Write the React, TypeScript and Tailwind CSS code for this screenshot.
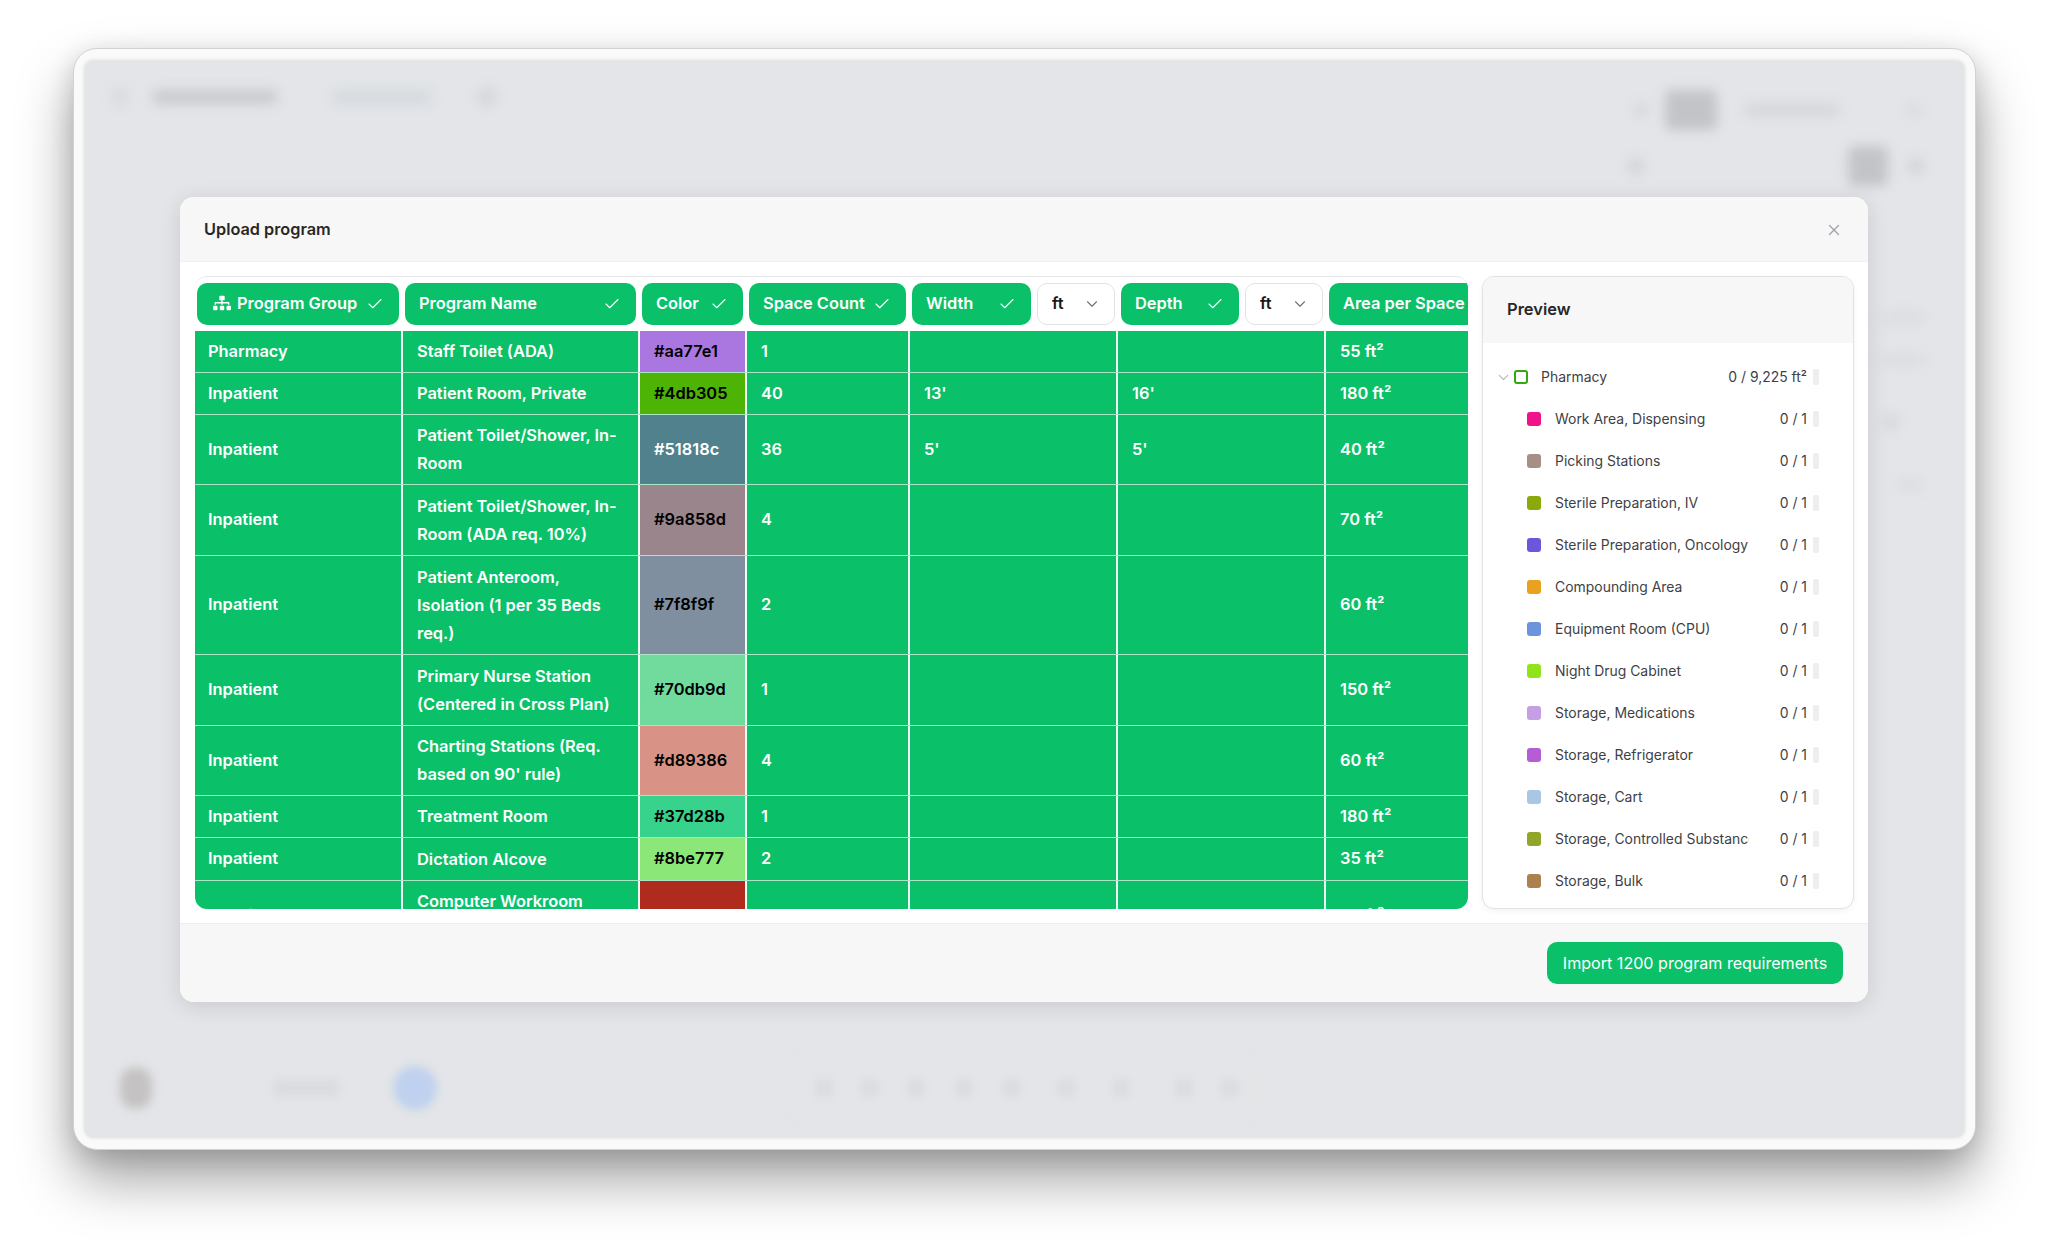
import { Check, ChevronDown, X } from "lucide-react";
import { FaSitemap } from "react-icons/fa";

type Row = { group: string; name: string; color: string; dark?: boolean; label?: string; count: string; width: string; depth: string; area: string; h: string };

const rows: Row[] = [
  { group: "Pharmacy", name: "Staff Toilet (ADA)", color: "bg-[#aa77e1]", label: "#aa77e1", count: "1", width: "", depth: "", area: "55 ft²", h: "h-[42px]" },
  { group: "Inpatient", name: "Patient Room, Private", color: "bg-[#4db305]", label: "#4db305", count: "40", width: "13'", depth: "16'", area: "180 ft²", h: "h-[42px]" },
  { group: "Inpatient", name: "Patient Toilet/Shower, In-\nRoom", color: "bg-[#51818c]", label: "#51818c", dark: true, count: "36", width: "5'", depth: "5'", area: "40 ft²", h: "h-[70px]" },
  { group: "Inpatient", name: "Patient Toilet/Shower, In-\nRoom (ADA req. 10%)", color: "bg-[#9a858d]", label: "#9a858d", count: "4", width: "", depth: "", area: "70 ft²", h: "h-[71px]" },
  { group: "Inpatient", name: "Patient Anteroom,\nIsolation (1 per 35 Beds\nreq.)", color: "bg-[#7f8f9f]", label: "#7f8f9f", count: "2", width: "", depth: "", area: "60 ft²", h: "h-[99px]" },
  { group: "Inpatient", name: "Primary Nurse Station\n(Centered in Cross Plan)", color: "bg-[#70db9d]", label: "#70db9d", count: "1", width: "", depth: "", area: "150 ft²", h: "h-[71px]" },
  { group: "Inpatient", name: "Charting Stations (Req.\nbased on 90' rule)", color: "bg-[#d89386]", label: "#d89386", count: "4", width: "", depth: "", area: "60 ft²", h: "h-[70px]" },
  { group: "Inpatient", name: "Treatment Room", color: "bg-[#37d28b]", label: "#37d28b", count: "1", width: "", depth: "", area: "180 ft²", h: "h-[42px]" },
  { group: "Inpatient", name: "Dictation Alcove", color: "bg-[#8be777]", label: "#8be777", count: "2", width: "", depth: "", area: "35 ft²", h: "h-[43px]" },
  { group: "Inpatient", name: "Computer Workroom\n\u00a0", color: "bg-[#ae2b1d]", label: "#ae2b1d", dark: true, count: "1", width: "", depth: "", area: "80 ft²", h: "h-[70px]" },
];

const preview = [
  ["Work Area, Dispensing", "bg-[#f0128a]"],
  ["Picking Stations", "bg-[#a68f84]"],
  ["Sterile Preparation, IV", "bg-[#8aa90a]"],
  ["Sterile Preparation, Oncology", "bg-[#6c56dc]"],
  ["Compounding Area", "bg-[#eaa21e]"],
  ["Equipment Room (CPU)", "bg-[#6c94dd]"],
  ["Night Drug Cabinet", "bg-[#8fe519]"],
  ["Storage, Medications", "bg-[#c49fe3]"],
  ["Storage, Refrigerator", "bg-[#b65dd6]"],
  ["Storage, Cart", "bg-[#a9c6e4]"],
  ["Storage, Controlled Substance", "bg-[#91a528]"],
  ["Storage, Bulk", "bg-[#ac8150]"],
];

const toolbarGaps = ["ml-0", "ml-[28px]", "ml-[28px]", "ml-[30px]", "ml-[29px]", "ml-[37px]", "ml-[37px]", "ml-[45px]", "ml-[28px]"];

function Chip({ label, w, icon }: { label: string; w: string; icon?: boolean }) {
  return (
    <div className={`${w} flex h-[42px] shrink-0 items-center justify-between rounded-[10px] bg-[#0ac169] ${icon ? "pl-[16px]" : "pl-[14px]"} pb-[1px] pr-[15px] text-white`}>
      <span className="flex items-center gap-[6px] whitespace-nowrap">
        {icon && <FaSitemap className="h-[18px] w-[18px]" />}
        {label}
      </span>
      <Check className="h-[18px] w-[18px] shrink-0" strokeWidth={1.5} />
    </div>
  );
}

function Unit({ w = "w-[78px]" }: { w?: string }) {
  return (
    <div className={`${w} flex h-[42px] shrink-0 items-center justify-between rounded-[10px] border border-[#e2e3e6] bg-white pb-[1px] pl-[14px] pr-[13px] text-[#18181b]`}>
      <span>ft</span>
      <ChevronDown className="h-[18px] w-[18px] text-[#71717a]" strokeWidth={1.5} />
    </div>
  );
}

function Blot({ className }: { className: string }) {
  return <div className={`shrink-0 ${className}`} />;
}

export default function App() {
  return (
    <div className="h-[1246px] w-[2048px] overflow-hidden bg-white pl-[73px] pt-[48px] [font-family:Inter,'Liberation_Sans',sans-serif]">
      <div className="h-[1102px] w-[1903px] rounded-[24px] border border-[#d2d2d4] bg-[#fafafa] px-[11px] pb-[12px] pt-[12px] shadow-[0_30px_55px_rgba(0,0,0,0.36),0_6px_24px_rgba(0,0,0,0.14)]">
        <div className="relative h-full w-full overflow-hidden rounded-[8px] bg-[#e3e5e8] shadow-[0_0_4px_rgba(0,0,0,0.18)]">
          {/* blurred application behind the dialog */}
          <div className="flex h-full flex-col justify-between">
            <div className="flex justify-between pl-[26px] pr-[40px] pt-[29px]">
              <div className="-mt-[6px] flex h-[14px] items-center pt-[12px] blur-[6px]">
                <Blot className="h-[18px] w-[18px] rounded-full bg-[#d9dadd]" />
                <Blot className="ml-[24px] h-[14px] w-[124px] rounded bg-[#c9cacd]" />
                <Blot className="ml-[56px] h-[14px] w-[98px] rounded bg-[#d5dadf]" />
                <Blot className="ml-[46px] h-[20px] w-[20px] rounded-full bg-[#d6d7da]" />
              </div>
              <div className="flex w-[290px] flex-col blur-[6px]">
                <div className="flex items-center">
                  <Blot className="h-[14px] w-[14px] rounded-full bg-[#d5d6d9]" />
                  <Blot className="ml-[17px] h-[40px] w-[52px] rounded-[6px] bg-[#c3c4c8]" />
                  <Blot className="ml-[28px] h-[12px] w-[94px] rounded bg-[#d5d6d9]" />
                  <Blot className="ml-auto mr-[3px] h-[14px] w-[14px] rounded-full bg-[#d9dadd]" />
                </div>
                <div className="mt-[16px] flex items-center">
                  <Blot className="-ml-[6px] h-[16px] w-[16px] rounded-full bg-[#d2d3d6]" />
                  <Blot className="ml-[204px] h-[40px] w-[40px] rounded-[8px] bg-[#c3c4c8]" />
                  <Blot className="ml-auto h-[16px] w-[16px] rounded-full bg-[#d2d3d6]" />
                </div>
                <div className="mt-[126px] flex flex-col items-end">
                  <Blot className="h-[12px] w-[42px] rounded bg-[#dcdde0]" />
                  <Blot className="mt-[30px] h-[12px] w-[42px] rounded bg-[#dcdde0]" />
                  <Blot className="mr-[25px] mt-[48px] h-[16px] w-[16px] rounded-full bg-[#d6d7da]" />
                  <Blot className="mt-[50px] h-[10px] w-[28px] rounded bg-[#dcdde0]" />
                </div>
              </div>
            </div>
            <div className="mb-[12px] flex h-[75px] items-center pl-[35px]">
              <Blot className="h-[42px] w-[32px] rounded-full bg-[#c4c2c2] blur-[5px]" />
              <Blot className="ml-[121px] h-[16px] w-[66px] rounded bg-[#dadbde] blur-[5px]" />
              <Blot className="ml-[54px] h-[44px] w-[44px] rounded-full bg-[#bfd1ee] blur-[4px]" />
              <div className="ml-[351px] flex h-[75px] w-[472px] items-center rounded-[10px] border border-[#e0e1e4] pl-[26px] blur-[3px]">
                {toolbarGaps.map((gap, i) => (
                  <Blot key={i} className={`${gap} h-[18px] w-[18px] rounded bg-[#dcdde0]`} />
                ))}
              </div>
            </div>
          </div>

          {/* dialog */}
          <div className="absolute left-[95px] top-[136px] flex h-[805px] w-[1688px] flex-col overflow-hidden rounded-[14px] bg-white shadow-[0_4px_22px_rgba(0,0,0,0.12)]">
            <div className="flex h-[65px] shrink-0 items-center justify-between border-b border-[#f0f0f0] bg-[#f7f7f7] pl-[24px] pr-[25px] pt-[1px]">
              <span className="text-[16.3px] font-semibold text-[#27272a]">Upload program</span>
              <X className="h-[18px] w-[18px] text-[#a1a1aa]" strokeWidth={1.75} />
            </div>
            <div className="flex h-[661px] shrink-0 gap-[14px] pl-[15px] pr-[14px] pt-[14px]">
              {/* table */}
              <div className="h-[633px] w-[1273px] shrink-0 overflow-hidden rounded-[12px] border-t border-[#e6e6e8] bg-white text-[16.4px] font-semibold">
                <div className="flex gap-[6px] overflow-hidden pl-[2px] pt-[6px]">
                  <Chip label="Program Group" w="w-[202px]" icon />
                  <Chip label="Program Name" w="w-[231px]" />
                  <Chip label="Color" w="w-[101px]" />
                  <Chip label="Space Count" w="w-[157px]" />
                  <Chip label="Width" w="w-[119px]" />
                  <Unit />
                  <Chip label="Depth" w="w-[118px]" />
                  <Unit />
                  <div className="flex h-[42px] w-[160px] shrink-0 items-center whitespace-nowrap rounded-[10px] bg-[#0ac169] pb-[1px] pl-[14px] text-white">
                    Area per Space
                  </div>
                </div>
                <div className="mt-[6px]">
                  {rows.map((r, i) => (
                    <div key={i} className={`${r.h} flex border-b border-[#a9e6c8] bg-[#0ac169] text-white`}>
                      <div className="flex w-[208px] shrink-0 items-center border-r-2 border-[#f0fbf5] pb-[1px] pl-[13px]">{r.group}</div>
                      <div className="flex w-[237px] shrink-0 items-center whitespace-pre-line border-r-2 border-[#f0fbf5] pb-[1px] pl-[14px] leading-[28px]">{r.name}</div>
                      <div className={`${r.color} ${r.dark ? "text-white" : "text-black"} flex w-[107px] shrink-0 items-center border-r-2 border-[#f0fbf5] pb-[1px] pl-[14px]`}>{r.label}</div>
                      <div className="flex w-[163px] shrink-0 items-center border-r-2 border-[#f0fbf5] pb-[1px] pl-[14px]">{r.count}</div>
                      <div className="flex w-[208px] shrink-0 items-center border-r-2 border-[#f0fbf5] pb-[1px] pl-[14px]">{r.width}</div>
                      <div className="flex w-[208px] shrink-0 items-center border-r-2 border-[#f0fbf5] pb-[1px] pl-[14px]">{r.depth}</div>
                      <div className="flex flex-1 items-center pb-[1px] pl-[14px]">{r.area}</div>
                    </div>
                  ))}
                </div>
              </div>
              {/* preview */}
              <div className="h-[633px] w-[372px] shrink-0 overflow-hidden rounded-[12px] border border-[#e2e2e4] bg-white shadow-[0_2px_6px_rgba(0,0,0,0.05)]">
                <div className="flex h-[66px] items-center bg-[#f7f7f7] pb-[1px] pl-[24px] text-[16.5px] font-semibold text-[#27272a]">Preview</div>
                <div className="pt-[13px] text-[13.95px] text-[#3f3f46]">
                  <div className="flex h-[42px] items-center pl-[12px]">
                    <ChevronDown className="h-[17px] w-[17px] text-[#b4b4b8]" strokeWidth={1.5} />
                    <div className="ml-[2px] h-[14px] w-[14px] rounded-[3px] border-2 border-[#35a80f]" />
                    <span className="ml-[13px]">Pharmacy</span>
                    <span className="ml-auto">0 / 9,225 ft²</span>
                    <div className="ml-[6px] mr-[34px] h-[16px] w-[6px] rounded-[2px] bg-[#eeeeef]" />
                  </div>
                  {preview.map(([name, color]) => (
                    <div key={name} className="flex h-[42px] items-center pl-[44px]">
                      <div className={`${color} h-[14px] w-[14px] shrink-0 rounded-[3px]`} />
                      <span className="ml-[14px] w-[194px] overflow-hidden whitespace-nowrap">{name}</span>
                      <span className="ml-auto">0 / 1</span>
                      <div className="ml-[6px] mr-[34px] h-[16px] w-[6px] rounded-[2px] bg-[#eeeeef]" />
                    </div>
                  ))}
                </div>
              </div>
            </div>
            <div className="flex flex-1 items-center justify-end border-t border-[#eeeeee] bg-[#f7f7f7] pr-[25px]">
              <button className="flex h-[42px] w-[296px] items-center justify-center rounded-[10px] bg-[#0ac169] text-[16.1px] font-normal text-white">
                Import 1200 program requirements
              </button>
            </div>
          </div>
        </div>
      </div>
    </div>
  );
}
